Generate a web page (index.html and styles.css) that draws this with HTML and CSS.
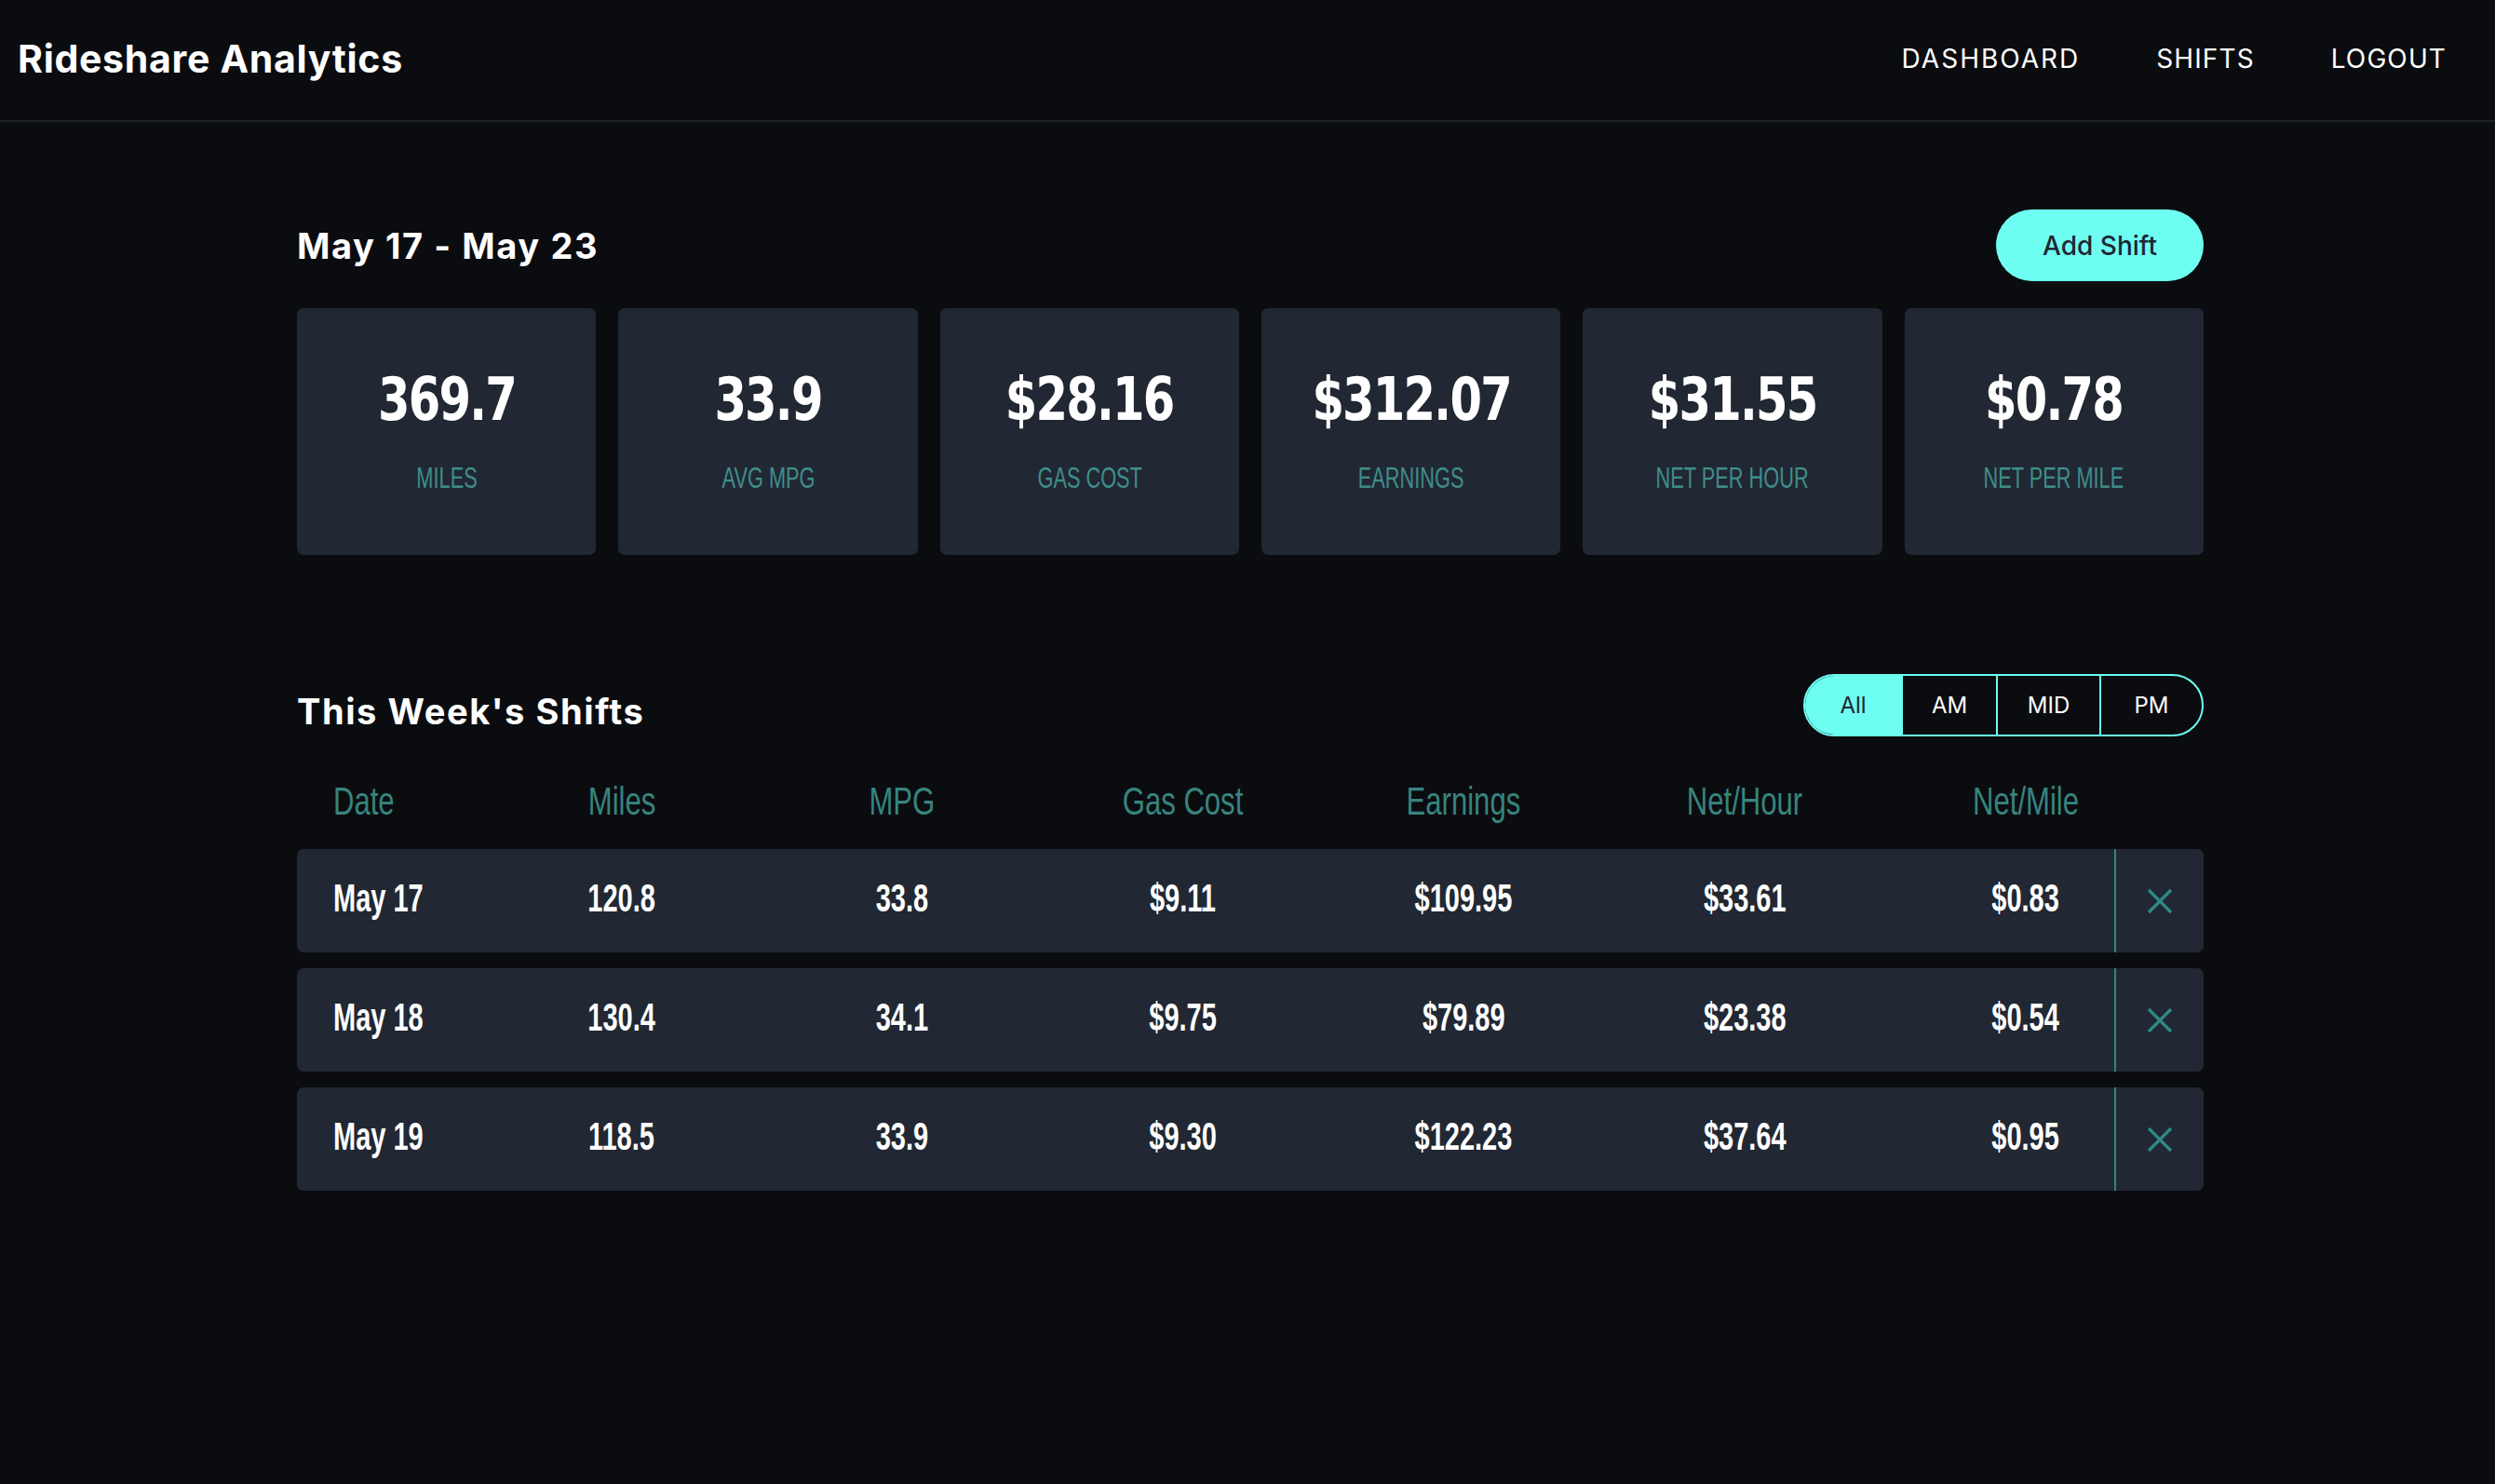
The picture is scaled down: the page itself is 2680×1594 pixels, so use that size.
FILE: index.html
```html
<!DOCTYPE html>
<html lang="en">
<head>
<meta charset="utf-8">
<title>Rideshare Analytics</title>
<link rel="stylesheet" href="styles.css">
</head>
<body>
<header class="topbar">
  <div class="brand">Rideshare Analytics</div>
  <nav class="nav">
    <a class="nav-link">DASHBOARD</a>
    <a class="nav-link">SHIFTS</a>
    <a class="nav-link">LOGOUT</a>
  </nav>
</header>

<main class="main">
  <section class="week">
    <div class="section-head">
      <h2 class="section-title">May 17 - May 23</h2>
      <button class="add-btn">Add Shift</button>
    </div>
    <div class="cards">
      <div class="card"><div class="card-value"><span class="vq">369.7</span></div><div class="card-label"><span class="lq">MILES</span></div></div>
      <div class="card"><div class="card-value"><span class="vq">33.9</span></div><div class="card-label"><span class="lq">AVG MPG</span></div></div>
      <div class="card"><div class="card-value"><span class="vq">$28.16</span></div><div class="card-label"><span class="lq">GAS COST</span></div></div>
      <div class="card"><div class="card-value"><span class="vq">$312.07</span></div><div class="card-label"><span class="lq">EARNINGS</span></div></div>
      <div class="card"><div class="card-value"><span class="vq">$31.55</span></div><div class="card-label"><span class="lq">NET PER HOUR</span></div></div>
      <div class="card"><div class="card-value"><span class="vq">$0.78</span></div><div class="card-label"><span class="lq">NET PER MILE</span></div></div>
    </div>
  </section>

  <section class="shifts">
    <div class="section-head shifts-head">
      <h2 class="section-title">This Week's Shifts</h2>
      <div class="toggle">
        <button class="seg active">All</button>
        <button class="seg">AM</button>
        <button class="seg">MID</button>
        <button class="seg">PM</button>
      </div>
    </div>

    <div class="thead">
      <div class="grid">
        <div class="cell first"><span class="hq left">Date</span></div>
        <div class="cell"><span class="hq">Miles</span></div>
        <div class="cell"><span class="hq">MPG</span></div>
        <div class="cell"><span class="hq">Gas Cost</span></div>
        <div class="cell"><span class="hq">Earnings</span></div>
        <div class="cell"><span class="hq">Net/Hour</span></div>
        <div class="cell"><span class="hq">Net/Mile</span></div>
      </div>
      <div class="del-spacer"></div>
    </div>

    <div class="row">
      <div class="grid">
        <div class="cell first"><span class="rq left">May 17</span></div>
        <div class="cell"><span class="rq">120.8</span></div>
        <div class="cell"><span class="rq">33.8</span></div>
        <div class="cell"><span class="rq">$9.11</span></div>
        <div class="cell"><span class="rq">$109.95</span></div>
        <div class="cell"><span class="rq">$33.61</span></div>
        <div class="cell"><span class="rq">$0.83</span></div>
      </div>
      <div class="del"><svg class="x" viewBox="0 0 28 28"><path d="M2 2 L26 26 M26 2 L2 26"/></svg></div>
    </div>

    <div class="row">
      <div class="grid">
        <div class="cell first"><span class="rq left">May 18</span></div>
        <div class="cell"><span class="rq">130.4</span></div>
        <div class="cell"><span class="rq">34.1</span></div>
        <div class="cell"><span class="rq">$9.75</span></div>
        <div class="cell"><span class="rq">$79.89</span></div>
        <div class="cell"><span class="rq">$23.38</span></div>
        <div class="cell"><span class="rq">$0.54</span></div>
      </div>
      <div class="del"><svg class="x" viewBox="0 0 28 28"><path d="M2 2 L26 26 M26 2 L2 26"/></svg></div>
    </div>

    <div class="row">
      <div class="grid">
        <div class="cell first"><span class="rq left">May 19</span></div>
        <div class="cell"><span class="rq">118.5</span></div>
        <div class="cell"><span class="rq">33.9</span></div>
        <div class="cell"><span class="rq">$9.30</span></div>
        <div class="cell"><span class="rq">$122.23</span></div>
        <div class="cell"><span class="rq">$37.64</span></div>
        <div class="cell"><span class="rq">$0.95</span></div>
      </div>
      <div class="del"><svg class="x" viewBox="0 0 28 28"><path d="M2 2 L26 26 M26 2 L2 26"/></svg></div>
    </div>
  </section>
</main>
</body>
</html>
```

FILE: styles.css
```css
* { box-sizing: border-box; }

html, body {
  margin: 0;
  padding: 0;
  background: #0b0c10;
  color: #ffffff;
  font-family: Inter, "Open Sans", "Liberation Sans", sans-serif;
}

.topbar {
  height: 131px;
  display: flex;
  align-items: center;
  justify-content: space-between;
  padding: 0 52px 4px 19px;
  border-bottom: 2px solid #1d222a;
}

.brand {
  font-family: Inter, "Liberation Sans", sans-serif;
  font-weight: 700;
  font-size: 41px;
  letter-spacing: 0.7px;
  color: #ffffff;
}

.nav {
  display: flex;
  gap: 82px;
}

.nav-link {
  font-family: Inter, "Liberation Sans", sans-serif;
  font-size: 28px;
  font-weight: 400;
  letter-spacing: 1.1px;
  color: #ffffff;
}

.nav-link:first-child { letter-spacing: 2px; }

.main {
  width: 2054px;
  margin: 0 auto;
  padding-top: 94px;
  padding-left: 6px;
}

.section-head {
  display: flex;
  align-items: center;
  justify-content: space-between;
}

.section-title {
  margin: 0;
  font-family: Inter, "Liberation Sans", sans-serif;
  font-weight: 700;
  font-size: 38px;
  letter-spacing: 1.6px;
  color: #ffffff;
}

.add-btn {
  width: 223px;
  height: 77px;
  border: none;
  border-radius: 39px;
  background: #6dfdf1;
  color: #1f2733;
  font-family: Inter, "Liberation Sans", sans-serif;
  font-size: 28px;
  font-weight: 500;
  padding: 0;
}

.cards {
  display: grid;
  grid-template-columns: repeat(6, 1fr);
  gap: 24px;
  margin-top: 29px;
}

.card {
  height: 265px;
  background: #212833;
  border-radius: 7px;
  display: flex;
  flex-direction: column;
  align-items: center;
  padding-top: 66px;
}

.card-value {
  font-family: "DejaVu Sans Condensed", "DejaVu Sans", sans-serif;
  font-stretch: condensed;
  font-weight: 700;
  font-size: 64px;
  line-height: 64px;
  height: 64px;
  letter-spacing: -2px;
  color: #ffffff;
  white-space: nowrap;
}

.card-label {
  margin-top: 36px;
  height: 32px;
  font-family: "Liberation Sans Narrow", "Liberation Sans", sans-serif;
  font-stretch: condensed;
  font-size: 32px;
  line-height: 32px;
  color: #3f8e8a;
  white-space: nowrap;
}

.vq, .lq, .hq, .rq {
  display: inline-block;
  transform-origin: center;
  white-space: nowrap;
}

.vq { transform: scaleX(0.86); }
.lq { transform: scaleX(0.68); }
.hq { transform: scaleX(0.74); }
.rq { transform: scaleX(0.69); }

.left { transform-origin: left center; }

.shifts { margin-top: 128px; }

.shifts-head .section-title { margin-top: 12px; }

.toggle {
  display: flex;
  height: 67px;
  border: 2px solid #6dfdf1;
  border-radius: 34px;
  overflow: hidden;
}

.seg {
  border: none;
  border-left: 2px solid #6dfdf1;
  background: transparent;
  color: #ffffff;
  font-family: Inter, "Liberation Sans", sans-serif;
  font-size: 24px;
  padding: 0;
  height: 100%;
}

.seg:first-child { border-left: none; width: 103px; }
.seg:nth-child(2) { width: 102px; }
.seg:nth-child(3) { width: 111px; }
.seg:nth-child(4) { width: 110px; }

.seg.active {
  background: #6dfdf1;
  color: #1f2733;
}

.thead {
  display: flex;
  height: 60px;
  margin-top: 40px;
  margin-bottom: 21px;
  align-items: center;
  font-family: "Liberation Sans Narrow", "Liberation Sans", sans-serif;
  font-size: 42px;
  color: #37847f;
}

.del-spacer { width: 96px; }

.grid {
  flex: 1;
  display: grid;
  grid-template-columns: 98px repeat(6, 180px);
  column-gap: 121.6px;
  padding-left: 39px;
  align-items: center;
}

.cell {
  text-align: center;
  line-height: 42px;
}

.cell.first { text-align: left; }

.row {
  display: flex;
  height: 111px;
  margin-bottom: 17px;
  background: #212833;
  border-radius: 7px;
  font-family: "Liberation Sans Narrow", "Liberation Sans", sans-serif;
  font-size: 42px;
  font-weight: 700;
  color: #ffffff;
  align-items: stretch;
}

.row .grid { align-self: center; margin-top: -6px; }

.del {
  width: 96px;
  border-left: 2px solid #2f8580;
  display: flex;
  align-items: center;
  justify-content: center;
}

.x {
  width: 28px;
  height: 28px;
  fill: none;
  stroke: #2f8a82;
  stroke-width: 3.2;
}
```
